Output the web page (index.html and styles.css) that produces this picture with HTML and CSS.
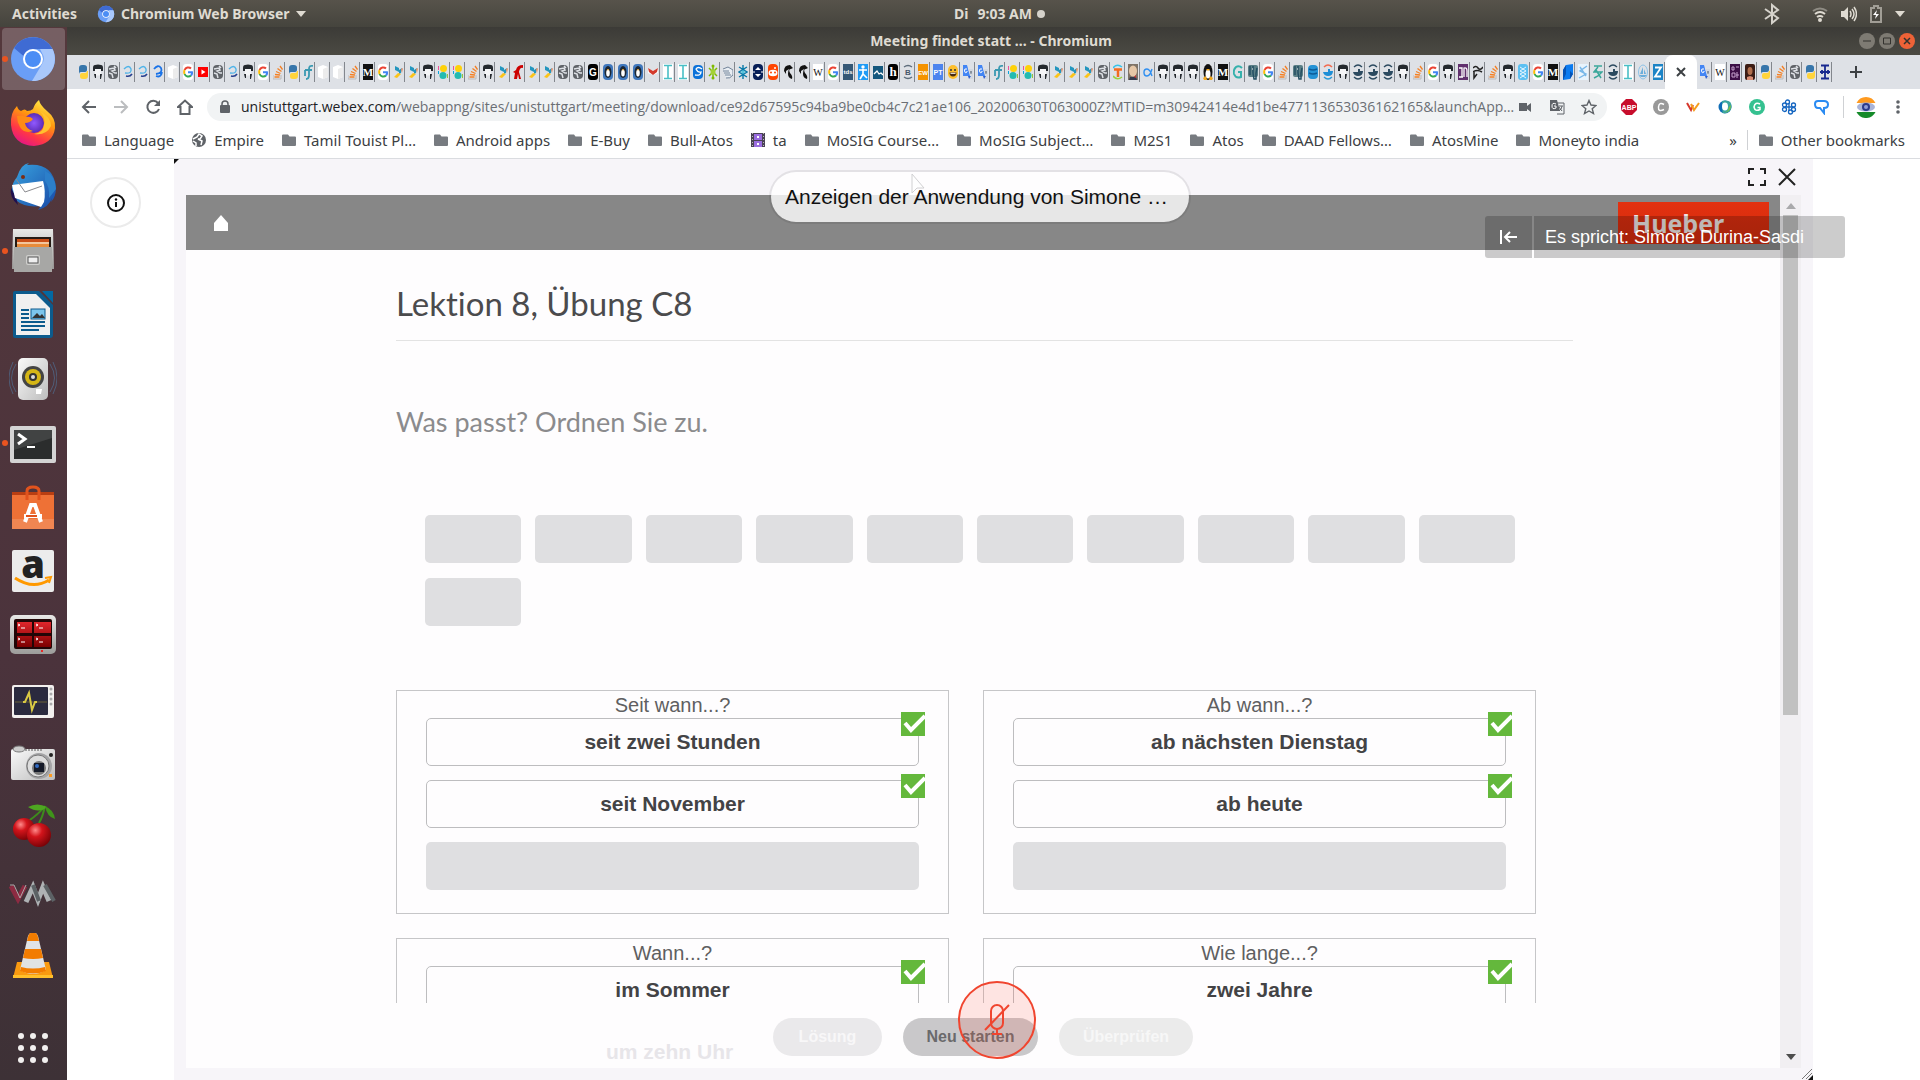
FILE: index.html
```html
<!DOCTYPE html>
<html lang="de">
<head>
<meta charset="utf-8">
<title>Meeting findet statt ... - Chromium</title>
<link rel="stylesheet" href="styles.css">
</head>
<body>
<svg class="sprite" aria-hidden="true">
  <defs>
    <linearGradient id="fox" x1="0.8" y1="0" x2="0.3" y2="1"><stop offset="0" stop-color="#fff44f"/><stop offset=".4" stop-color="#ff980e"/><stop offset=".75" stop-color="#ff3647"/><stop offset="1" stop-color="#e31587"/></linearGradient>
    <linearGradient id="metal" x1="0" y1="0" x2="0" y2="1"><stop offset="0" stop-color="#e8e8e6"/><stop offset="1" stop-color="#9c9c9a"/></linearGradient>
    <linearGradient id="silver" x1="0" y1="0" x2="1" y2="1"><stop offset="0" stop-color="#fafafa"/><stop offset="1" stop-color="#bdbdbd"/></linearGradient>
    <linearGradient id="redscreen" x1="0" y1="0" x2="0" y2="1"><stop offset="0" stop-color="#e0262c"/><stop offset="1" stop-color="#7c0000"/></linearGradient>
    <linearGradient id="bird" x1="0" y1="0" x2="1" y2="1"><stop offset="0" stop-color="#3aa5e0"/><stop offset="1" stop-color="#1747a6"/></linearGradient>
    <radialGradient id="cherry" cx=".35" cy=".3" r=".8"><stop offset="0" stop-color="#ff8a8a"/><stop offset=".35" stop-color="#d3141b"/><stop offset="1" stop-color="#6c0004"/></radialGradient>
    <radialGradient id="globe-core"><stop offset="0" stop-color="#9059ff"/><stop offset="1" stop-color="#5b2bb5"/></radialGradient>
  </defs>
  <symbol id="chromium" viewBox="0 0 48 48">
    <circle cx="24" cy="24" r="22" fill="#6a9ef6"/>
    <path d="M5 13A22 22 0 0 1 43.500 14H24a10 10 0 0 0-9.500 7Z" fill="#3f6bd3"/>
    <path d="M43.500 14A22 22 0 0 1 23 46l9.500-16a10 10 0 0 0 .5-12L31 14Z" fill="#a9c8fb"/>
    <circle cx="24" cy="24" r="10" fill="#fff"/><circle cx="24" cy="24" r="8" fill="#4b8df5"/>
  </symbol>
  <symbol id="folder" viewBox="0 0 14 13"><path d="M1 1h5l1.500 2H13q1 0 1 1v7.500q0 1-1 1H1q-1 0-1-1V2q0-1 1-1Z" fill="#777b80"/></symbol>
  <symbol id="tick" viewBox="0 0 24 24"><path d="M0 0h24v24H0Z" fill="#64b83c"/><path d="M4 11l6 7L24 4" fill="none" stroke="#fff" stroke-width="4"/></symbol>
</svg>
<template id="favicons">
<svg>
  <symbol id="t-py"><path d="M1 8V4q0-3 3-3h2q3 0 3 2.500V6q0 2-2 2H3Q1 8 1 10Z" fill="#3776ab"/><path d="M10 7v5q0 3-3 3H5q-3 0-3-2.500V11q0-2 2-2h3q2 0 2-2Z" fill="#ffd43b"/></symbol>
  <symbol id="t-gh"><path d="M2 5h6v6q-3 1-6 0Z" fill="#f4f5f7"/><path d="M0 4Q0 1 2 1q3-1 6 0 2 0 2 3v3H8V5H2v2H0ZM1 10h2v4H2ZM7 10h2l-1 5H7Z" fill="#24292e"/></symbol>
  <symbol id="t-globe"><rect y="1" width="10" height="14" rx="4" fill="#5f6368"/><path d="M1 5l5-1 1 2-3 1 3 2 2 0M1 9l3 1 1 4M6 2l2 2" stroke="#dee1e6" stroke-width="1.500" fill="none"/></symbol>
  <symbol id="t-swirl"><path d="M1 5q5-5 7 0 1 5-6 4" fill="none" stroke="#4eb3e8" stroke-width="1.400"/><path d="M3 12q4 1 6-2" fill="none" stroke="#28408f" stroke-width="1.600"/></symbol>
  <symbol id="t-swirlb"><path d="M1 5q4-5 7-1 2 5-5 6M3 12q5 2 6-4" fill="none" stroke="#1a73e8" stroke-width="1.800"/></symbol>
  <symbol id="t-cube"><path d="M0 3l5-2 5 2v10l-5 2-5-2Z" fill="#fff"/><path d="M5 5l5-2v10l-5 2Z" fill="#ececec"/></symbol>
  <symbol id="t-g"><rect width="10" height="16" rx="3" fill="#fff"/><g fill="none" stroke-width="2"><path d="M8 4.500A4 4 0 0 0 1.600 6" stroke="#ea4335"/><path d="M1.600 6a5 5 0 0 0 0 4" stroke="#fbbc05"/><path d="M1.600 10A4 4 0 0 0 8 11.500" stroke="#34a853"/><path d="M8 11.500Q9.300 10 9 8.300H5" stroke="#4285f4"/></g></symbol>
  <symbol id="t-yt"><rect y="3" width="10" height="10" fill="#f00"/><path d="M3.500 5.500 7.500 8l-4 2.500Z" fill="#fff"/></symbol>
  <symbol id="t-so"><path d="M1.500 13h5M2 10.500l5 .5M3 7.500l4.500 2M4.500 4.500l4 3M7 2l2.500 3.500" fill="none" stroke="#f48024" stroke-width="1.300"/><path d="M0 11v4h8v-4" fill="none" stroke="#bcbbbb"/></symbol>
  <symbol id="t-f"><path d="M10 2Q6 1 6 5v6q0 4-3 4M2 6h7M2 6v6" fill="none" stroke="#3b9ab2" stroke-width="1.800"/></symbol>
  <symbol id="t-m"><rect width="10" height="16" fill="#111"/><text x="5" y="12" text-anchor="middle" font-family="Liberation Serif,serif" font-weight="700" font-size="11" fill="#fff">M</text></symbol>
  <symbol id="t-bird"><path d="M2 2l4 2v4L2 6ZM6 6l3-2-1 5-2 1Z" fill="#2596be"/><path d="M1 13l4-4 3 1-4 4Z" fill="#fcc419"/><path d="M8 5l2-1-1 5" fill="#f08a5d"/></symbol>
  <symbol id="t-es"><circle cx="5.500" cy="4.500" r="3.500" fill="#fed10a"/><circle cx="5" cy="11.500" r="3.500" fill="#24bbb1"/><path d="M0 2h1v4H0Z" fill="#ef5098"/><path d="M0 7h1v3H0Z" fill="#07a5de"/><path d="M9 10h1v4H9Z" fill="#93c83e"/></symbol>
  <symbol id="t-red"><path d="M10 1Q4 1 3 6l-3 2 2 1-1 6h3l1-5 1 5h2L6 8q1-5 4-4Z" fill="#c00"/></symbol>
  <symbol id="t-gb"><rect width="10" height="16" rx="3" fill="#000"/><text x="5" y="12" text-anchor="middle" font-family="Liberation Sans,sans-serif" font-weight="700" font-size="10" fill="#fff">G</text></symbol>
  <symbol id="t-peng"><rect width="10" height="16" rx="4" fill="#3f77bc"/><ellipse cx="5" cy="8" rx="3.500" ry="6" fill="#1c2733"/><ellipse cx="5" cy="9" rx="1.800" ry="3.500" fill="#fff"/><path d="M4 5h2l-1 2Z" fill="#f5a623"/></symbol>
  <symbol id="t-v"><path d="M0 4l5 3 5-3v5l-5 2-5-2Z" fill="#fff"/><path d="M0 4l5 3 5-3-1 4-4 3-4-3Z" fill="#d33a2c"/></symbol>
  <symbol id="t-i"><rect width="10" height="16" fill="#fff"/><path d="M1 1.500h8M1 14.500h8M5 1v14" stroke="#49bfc6" stroke-width="1.600"/></symbol>
  <symbol id="t-bs"><rect y="1" width="10" height="14" rx="4" fill="#0b72d9"/><path d="M9 5q-4-3-6 0 2 4 5 3 0 4-6 3" fill="none" stroke="#fff" stroke-width="1.300"/></symbol>
  <symbol id="t-hub"><path d="M5 1v14M1 4l8 8M9 4l-8 8" stroke="#7fba00" stroke-width="1.500"/><circle cx="5" cy="8" r="2.500" fill="#a4d233"/><circle cx="5" cy="2" r="1.500" fill="#7fba00"/><circle cx="5" cy="14" r="1.500" fill="#7fba00"/></symbol>
  <symbol id="t-hand"><path d="M0 5l5-2 5 3v5q-3 4-7 3M0 7h6M1 9h6M2 11h6" fill="#e9eef3" stroke="#718298"/></symbol>
  <symbol id="t-hex"><path d="M5 1v14M1 3l8 5-8 5M9 3L1 8l8 5" fill="none" stroke="#0879a8" stroke-width="1.400"/><circle cx="5" cy="8" r="1.800" fill="#57c4dd"/></symbol>
  <symbol id="t-navy"><rect width="10" height="16" rx="4" fill="#071f57"/><path d="M5 3l3 3H2ZM5 13l3-3H2Z" fill="#fff"/><path d="M1 7v2M9 7v2" stroke="#fff"/></symbol>
  <symbol id="t-red2"><rect width="10" height="16" rx="4" fill="#ff4500"/><ellipse cx="5" cy="9" rx="4.500" ry="3.300" fill="#fff"/><circle cx="3" cy="8.500" r="1" fill="#ff4500"/><circle cx="7" cy="8.500" r="1" fill="#ff4500"/><circle cx="7" cy="4" r="1" fill="#fff"/></symbol>
  <symbol id="t-horse"><path d="M1 7q0-6 6-6l3 3-2 1q-3 0-1 4 3 3 2 6-4-1-4-5Q5 7 6 5L3 7v3Z" fill="#111"/></symbol>
  <symbol id="t-w"><rect width="10" height="16" fill="#fff"/><text x="5" y="12" text-anchor="middle" font-family="Liberation Serif,serif" font-size="10" fill="#111">W</text></symbol>
  <symbol id="t-tds"><rect width="10" height="16" fill="#355876"/><text x="5" y="10" text-anchor="middle" font-family="Liberation Sans,sans-serif" font-weight="700" font-size="6" fill="#fff">tds</text></symbol>
  <symbol id="t-walk"><rect width="10" height="16" fill="#1f9bf5"/><circle cx="5" cy="3" r="1.700" fill="#fff"/><path d="M1 6h8M5 5v5l-3 5M5 10l4 4" stroke="#fff" stroke-width="1.700" fill="none"/></symbol>
  <symbol id="t-mount"><rect y="2" width="10" height="13" fill="#14587e"/><path d="M1 10l3-3 2 3 2-1 2 2" stroke="#fff" fill="none" stroke-width="1.300"/></symbol>
  <symbol id="t-h"><rect width="10" height="16" rx="3" fill="#000"/><text x="5" y="12" text-anchor="middle" font-family="Liberation Serif,serif" font-weight="700" font-size="13" fill="#fff">h</text></symbol>
  <symbol id="t-b"><path d="M1 3q4-3 8 0M1 13q4 3 8 0" fill="none" stroke="#5e6d7c" stroke-width="1.300"/><text x="5" y="11" text-anchor="middle" font-family="Liberation Sans,sans-serif" font-weight="700" font-size="8" fill="#46586b">B</text></symbol>
  <symbol id="t-ew"><rect width="10" height="16" fill="#f59300"/><text x="5" y="11" text-anchor="middle" font-family="Liberation Sans,sans-serif" font-weight="700" font-size="6" fill="#fff">EW</text></symbol>
  <symbol id="t-pt"><rect width="10" height="16" fill="#4c84ee"/><text x="5" y="11" text-anchor="middle" font-family="Liberation Sans,sans-serif" font-weight="700" font-size="7" fill="#fff">PT</text></symbol>
  <symbol id="t-emo"><rect y="1" width="10" height="14" rx="5" fill="#fdbf2d"/><path d="M2 6h2M6 6h2" stroke="#333" stroke-width="1.500"/><path d="M1.500 8.500h7q0 4-3.500 4t-3.500-4Z" fill="#4a2c12"/><path d="M2.500 9.300h5" stroke="#fff"/></symbol>
  <symbol id="t-gt"><path d="M0 1h4l3 11H0Z" fill="#4285f4"/><path d="M5 5h5v10H6L8 12Z" fill="#d3d8df"/><path d="M5 12h3l-2 3Z" fill="#2a5ed0"/><path d="M4 5Q1 4 1.500 7T4 8V7" stroke="#fff" fill="none"/><path d="M7 8h2M8 7v3" stroke="#6f7b89"/></symbol>
  <symbol id="t-t"><path d="M0 4q4-5 9-1" stroke="#36c3ea" fill="none" stroke-width="1.500"/><path d="M0 12q4 5 9 1" stroke="#9bd13c" fill="none" stroke-width="1.500"/><path d="M1 5.500h8M5 5v8" stroke="#f26b21" stroke-width="2.500"/></symbol>
  <symbol id="t-face"><rect width="10" height="16" fill="#7f7468"/><ellipse cx="5" cy="7" rx="4" ry="5.500" fill="#e6c7a7"/><path d="M2 13h6l1 3H1Z" fill="#333a4d"/><path d="M6 13l2-2v3Z" fill="#c33"/></symbol>
  <symbol id="t-alpha"><path d="M9 5q-2 7-5 7-3 0-3-3.500T4 5q3 0 5 7" fill="none" stroke="#2f8ff0" stroke-width="1.400"/></symbol>
  <symbol id="t-tux"><ellipse cx="5" cy="8" rx="4.500" ry="8" fill="#111"/><ellipse cx="5" cy="10" rx="2.500" ry="4.500" fill="#fff"/><path d="M3 5h4l-2 2ZM0 14l3-2 1 4H1ZM10 14l-3-2-1 4h3Z" fill="#f2a81d"/></symbol>
  <symbol id="t-gteal"><path d="M9 4Q6 1 3 3 0 6 1 10q2 5 7 3V8H5" fill="none" stroke="#35b1ac" stroke-width="2"/></symbol>
  <symbol id="t-pg"><rect y="1" width="10" height="12" rx="2" fill="#5b7f86"/><path d="M2 2v9M5 2v7l1 6h2V9l1-5" fill="none" stroke="#244f63" stroke-width="1.500"/><path d="M4 5h1" stroke="#fff"/></symbol>
  <symbol id="t-db"><rect y="1" width="10" height="14" rx="4" fill="#2492d5"/><path d="M1 5q4 2 8 0M1 9q4 2 8 0" fill="none" stroke="#0d5c98" stroke-width="1.400"/></symbol>
  <symbol id="t-whale"><path d="M1 3q4-4 8 0M1 13q4 4 8 0" fill="none" stroke="#2b4a60" stroke-width="1.300"/><path d="M0 8h5V5h2v2l3 0q0 5-5 5-4 0-5-4Z" fill="#2b4a60"/></symbol>
  <symbol id="t-whaler"><path d="M1 3q4-4 8 0" fill="none" stroke="#f26b50" stroke-width="1.500"/><path d="M1 13q4 4 8 0" fill="none" stroke="#2b9ad8" stroke-width="1.300"/><path d="M0 8h5V5h2v2l3 0q0 5-5 5-4 0-5-4Z" fill="#1d8ed6"/></symbol>
  <symbol id="t-rr"><rect width="10" height="16" fill="#61306e"/><path d="M1 4h3v9M6 13V4q3-1 3 3v6M1 13h4" fill="none" stroke="#fff" stroke-width="1.300"/></symbol>
  <symbol id="t-scr"><path d="M0 4q3-3 5 0t5-1M0 8q4-3 9 0M1 8v6l3-4" fill="none" stroke="#222" stroke-width="1.500"/></symbol>
  <symbol id="t-dots"><rect width="10" height="16" rx="3" fill="#5cc0f2"/><path d="M2 3l6 4-6 3 6 4M8 3L2 7l6 3-6 4" stroke="#e6f6ff" fill="none"/></symbol>
  <symbol id="t-fold"><path d="M3 1l7-1v10l-3 5-7 1V6Z" fill="#0b7bf0"/><path d="M3 1v9l-3 6V6ZM10 10l-3 5V7Z" fill="#0553b5"/></symbol>
  <symbol id="t-ls"><rect width="10" height="16" fill="#e8f3fc"/><path d="M9 2L2 7l6 3-7 4M2 3l6 9" fill="none" stroke="#79b7e8" stroke-width="1.400"/></symbol>
  <symbol id="t-han"><path d="M1 2h8M5 3L1 8h8L5 12l-4 2M3 6l5 8" fill="none" stroke="#3aa79a" stroke-width="1.500"/></symbol>
  <symbol id="t-boat"><ellipse cx="5" cy="8" rx="4.500" ry="7" fill="none" stroke="#8ec3e6"/><path d="M5 3v7H2ZM6 5l2 5H6ZM1 11h8l-2 2H3Z" fill="#6baedb"/></symbol>
  <symbol id="t-z"><rect width="10" height="16" fill="#1c84c6"/><path d="M2 3.500h6L2 12.500h6" fill="none" stroke="#fff" stroke-width="1.800"/></symbol>
  <symbol id="t-slk"><rect width="10" height="16" fill="#3c0f45"/><path d="M2 3h2v3H2ZM6 3h3M2 9h3v4H2ZM7 8v6M6 11h3" stroke="#c7a4ce" fill="none"/></symbol>
  <symbol id="t-girl"><rect width="10" height="16" rx="2" fill="#3b1c14"/><ellipse cx="5" cy="7" rx="2.500" ry="4" fill="#b06e4c"/><path d="M2 16v-3l3-1 3 1v3Z" fill="#d98d74"/></symbol>
  <symbol id="t-hh"><path d="M1 1.500h8M1 14.500h8M5 1v14M0 8h10M2 6v4M8 6v4" stroke="#17288f" stroke-width="1.800"/></symbol>
</svg>
</template>

<header class="topbar">
  <div class="topbar-left">
    <button class="bare">Activities</button>
    <button class="bare app-menu"><svg width="18" height="18"><use href="#chromium"/></svg>Chromium Web Browser<svg width="10" height="6" viewBox="0 0 10 6"><path d="M0 0h10L5 6Z" fill="currentColor"/></svg></button>
  </div>
  <button class="bare clock"><span>Di</span><span>9:03 AM</span><i class="dot"></i></button>
  <div class="topbar-right">
    <svg class="bt" width="18" height="22" viewBox="0 0 18 22"><path d="M2 6l13 9-6 5V2l6 5-13 9" fill="none" stroke="#d5d2cb" stroke-width="2"/></svg>
    <svg width="16" height="16" viewBox="0 0 16 16" fill="none" stroke="#dfdbd2" stroke-width="2"><path d="M1 5q7-5 14 0" stroke="#8f8c84"/><path d="M3 8q5-4 10 0M5 11q3-2 6 0"/><circle cx="8" cy="14" r="1"/></svg>
    <svg width="16" height="16" viewBox="0 0 16 16"><path d="M0 5h3l4-4v14l-4-4H0Z" fill="#dfdbd2"/><path d="M9 5q2 3 0 6M11 3q4 5 0 10M13 1q5 7 0 14" fill="none" stroke="#dfdbd2" stroke-width="1.500"/></svg>
    <svg width="12" height="18" viewBox="0 0 12 18"><path d="M1 3h3V1h4v2h3v14H1Z" fill="none" stroke="#a19e96" stroke-width="2"/><path d="M7 5l-4 5h3l-1 4 4-5H6Z" fill="#fff"/></svg>
    <svg width="10" height="6" viewBox="0 0 10 6"><path d="M0 0h10L5 6Z" fill="#dfdbd2"/></svg>
  </div>
</header>

<div class="desktop">
<nav class="dock" aria-label="Dock">
  <button class="app active running" aria-label="Chromium"><svg><use href="#chromium"/></svg></button>
  <button class="app" aria-label="Firefox"><svg viewBox="0 0 48 48"><path d="M2 26Q1 14 8 7q1 4 4 5 4-3 6 0 4 0 6-2 2-6 6-9 1 5 8 11 9 7 8 17-2 16-21 18Q4 46 2 26Z" fill="url(#fox)"/><circle cx="25" cy="24" r="10" fill="url(#globe-core)"/><path d="M8 17q6-1 9 1 4-1 7 2-3 4-8 4 1 6 8 8-9 3-13-4-3-5-3-11Z" fill="#ff8b16"/><path d="M31 12q6 7 4 14-1 8-10 9 12 2 17-8Q42 18 31 12Z" fill="#ffc22e"/></svg></button>
  <button class="app" aria-label="Thunderbird"><svg viewBox="0 0 48 48"><path d="M8 14Q12 1 20 0l-2 2Q44-1 47 24q0 10-5 15l1-4q-3 9-14 12l3-4q-16 2-24-5Q-2 26 8 14Z" fill="url(#bird)"/><path d="M2 25q-2 9 7 17l-2-8Z" fill="#20104f"/><path d="M3 22l31-4q3 10 1 21L32 44 6 35Z" fill="#fff"/><path d="M7 16l9 13 17-6" fill="none" stroke="#8b8b8f"/><path d="M36 18q5 6 4 17l7-9Q46 12 36 8Z" fill="#2c7fca"/><circle cx="14" cy="14" r="2" fill="#7b2d12"/></svg></button>
  <button class="app running" aria-label="Dateien"><svg viewBox="0 0 48 48"><path d="M4 2h40l1 40H3Z" fill="url(#metal)"/><path d="M6 10h36v10H6Z" fill="#241a14"/><path d="M8 12h32v4H8Z" fill="#c94d16"/><path d="M8 15h32v6H8Z" fill="#e88b39"/><path d="M8 16h32" stroke="#fff"/><path d="M5 20h38v25H5Z" fill="#a7a7a5"/><rect x="17" y="28" width="14" height="10" rx="2" fill="#cfcfcd"/><rect x="19" y="30" width="10" height="6" fill="#eee" stroke="#555"/></svg></button>
  <button class="app" aria-label="Writer"><svg viewBox="0 0 48 48"><path d="M6 0h24l14 14v30q0 3-3 3H6q-2 0-2-2V2q0-2 2-2Z" fill="#0c5b8d"/><path d="M33 0h11v12Z" fill="#0369a3"/><path d="M7 3h20l14 14v27H7Z" fill="#f0f0f0"/><path d="M12 19h8M12 23h8M12 27h8M12 31h24M12 35h24M12 39h18" stroke="#0c5b8d" stroke-width="2"/><rect x="22" y="18" width="14" height="10" fill="#7cc5ec" stroke="#0c5b8d"/><path d="M23 27l5-5 3 3 2-2 3 4Z" fill="#333"/></svg></button>
  <button class="app" aria-label="Rhythmbox"><svg viewBox="0 0 48 48"><path d="M7 9q-9 14 0 28M41 9q9 14 0 28M4 7q-8 16 0 32M44 7q8 16 0 32" fill="none" stroke="#4f5d78"/><rect x="9" y="3" width="30" height="42" rx="5" fill="url(#silver)"/><circle cx="24" cy="22" r="11" fill="#444"/><circle cx="24" cy="22" r="8" fill="#d5b616"/><circle cx="24" cy="22" r="4" fill="#333"/><circle cx="24" cy="22" r="2" fill="#ddd"/><path d="M27 34h6l-1 5h-5Z" fill="#fff"/></svg></button>
  <button class="app running" aria-label="Terminal"><svg viewBox="0 0 48 48"><rect x="1" y="7" width="46" height="37" rx="2" fill="#d4d4d4"/><rect x="5" y="11" width="38" height="29" fill="#2b2d2d"/><path d="M5 11h38v8L5 31Z" fill="#414343"/><path d="M9 15l7 5-7 5" fill="none" stroke="#fff" stroke-width="3"/><path d="M18 28h8" stroke="#fff" stroke-width="2"/></svg></button>
  <button class="app" aria-label="Software"><svg viewBox="0 0 48 48"><path d="M3 9h42v6H3Z" fill="#b83e12"/><path d="M3 12h42v34H3Z" fill="#ee7136"/><path d="M3 36h42v10H3Z" fill="#f08652"/><path d="M18 17V8q0-4 6-4t6 4v9" fill="none" stroke="#e1531d" stroke-width="3"/><path d="M16 39l6-17h4l6 17" fill="none" stroke="#fff" stroke-width="4"/><path d="M15 33h18" stroke="#fff" stroke-width="4"/><path d="M17 33h11" stroke="#e1531d" stroke-width="2"/></svg></button>
  <button class="app" aria-label="Amazon"><svg viewBox="0 0 48 48"><rect x="3" y="3" width="42" height="42" rx="2" fill="#ececec"/><text x="24" y="31" text-anchor="middle" font-family="Open Sans,sans-serif" font-weight="800" font-size="38" fill="#222">a</text><path d="M6 31q18 12 34 2" fill="none" stroke="#f90" stroke-width="3"/><path d="M36 31l6-1-2 6" fill="none" stroke="#f90" stroke-width="2"/></svg></button>
  <button class="app" aria-label="Terminator"><svg viewBox="0 0 48 48"><rect x="1" y="4" width="46" height="39" rx="5" fill="url(#metal)"/><rect x="5" y="8" width="38" height="30" rx="2" fill="#220607"/><path d="M8 11h15v11H8ZM25 11h17v11H25ZM8 25h15v11H8ZM25 25h17v11H25Z" fill="url(#redscreen)"/><path d="M9 13l2 1-2 1M12 17h4M27 13l2 1-2 1M30 17h4M9 27l2 1-2 1M12 31h4M27 27l2 1-2 1M30 31h4" stroke="#fff" fill="none"/><circle cx="33" cy="40" r="1" fill="red"/></svg></button>
  <button class="app" aria-label="Systemmonitor"><svg viewBox="0 0 48 48"><rect x="3" y="10" width="42" height="33" rx="2" fill="#f3f0ee"/><rect x="5" y="12" width="34" height="28" rx="1" fill="#2b2a3e"/><path d="M6 27h32" stroke="#6b6138"/><path d="M14 27h2l4-9 3 17 3-8h2" fill="none" stroke="#d9c944" stroke-width="2"/><g fill="#aaa"><circle cx="42" cy="14" r="1.500"/><circle cx="42" cy="19" r="1.500"/><circle cx="42" cy="24" r="1.500"/><circle cx="42" cy="29" r="1.500"/></g></svg></button>
  <button class="app" aria-label="Kamera"><svg viewBox="0 0 48 48"><rect x="2" y="10" width="44" height="31" rx="2" fill="url(#silver)"/><ellipse cx="10" cy="10" rx="6" ry="3" fill="#ccc" stroke="#777"/><path d="M16 11h18" stroke="#555" stroke-dasharray="2 1"/><circle cx="30" cy="27" r="13" fill="#a4a4a6"/><circle cx="29" cy="27" r="11" fill="#ddd" stroke="#777"/><circle cx="30" cy="29" r="7" fill="#777"/><path d="M25 24h10v9H25Z" fill="#151a28"/><circle cx="28" cy="27" r="2" fill="#326bc2"/><circle cx="42" cy="16" r="2" fill="#222"/><path d="M40 35h3v3h-3Z" fill="#ff9b21"/></svg></button>
  <button class="app" aria-label="CherryTree"><svg viewBox="0 0 48 48"><path d="M18 19q12-8 18-16-2 10-6 17" fill="none" stroke="#3d8b1c" stroke-width="2"/><path d="M19 4q9-5 19 0-8 7-19 0Z" fill="#4ea721"/><path d="M36 3q9 4 10 13-8-2-10-13Z" fill="#3f941a"/><circle cx="15" cy="26" r="11" fill="url(#cherry)"/><circle cx="30" cy="32" r="12" fill="url(#cherry)"/></svg></button>
  <button class="app" aria-label="Virtual Machine Manager"><svg viewBox="0 0 48 48"><path d="M2 19l7 13 7-13" fill="none" stroke="#8c2b42" stroke-width="5"/><path d="M1 18h4l6 13 6-13" fill="none" stroke="#aaa"/><path d="M17 35l7-15 5 13 5-13 6 14" fill="none" stroke="#aeb2b4" stroke-width="5"/><path d="M24 18l6 16M36 18l9 16" stroke="#5c6265" stroke-width="4"/></svg></button>
  <button class="app" aria-label="VLC"><svg viewBox="0 0 48 48"><path d="M8 31h32l4 16H4Z" fill="#f99a10"/><path d="M4 44h40v3H4Z" fill="#ffbf2a"/><path d="M22 2h4q2 0 3 3l8 34q-13 8-26 0L19 5q1-3 3-3Z" fill="#e0e3e5"/><path d="M22 2h4q2 0 3 4l1 4H18l1-4q1-4 3-4ZM16 18h16l2 9q-10 2-20 0ZM12 36q12 3 24 0l1 4q-13 5-26 0Z" fill="#f27c00"/></svg></button>
  <button class="app grid-app" aria-label="Anwendungen anzeigen"><svg viewBox="0 0 48 48" fill="#f2f0ef"><circle cx="12" cy="12" r="3"/><circle cx="24" cy="12" r="3"/><circle cx="36" cy="12" r="3"/><circle cx="12" cy="24" r="3"/><circle cx="24" cy="24" r="3"/><circle cx="36" cy="24" r="3"/><circle cx="12" cy="36" r="3"/><circle cx="24" cy="36" r="3"/><circle cx="36" cy="36" r="3"/></svg></button>
</nav>

<div class="window">
  <div class="titlebar">
    <span class="window-title">Meeting findet statt ... - Chromium</span>
    <div class="window-buttons">
      <button aria-label="Minimieren"><svg width="10" height="10"><path d="M1 5h8" stroke="#33322e"/></svg></button>
      <button aria-label="Maximieren"><svg width="10" height="10"><path d="M1.500 2h7v6h-7Z" stroke="#33322e" fill="none"/></svg></button>
      <button class="close" aria-label="Schließen"><svg width="10" height="10"><path d="M2 2l6 6M8 2L2 8" stroke="#33322e" stroke-width="1.500"/></svg></button>
    </div>
  </div>
  <div class="tabstrip">
    <div class="tabs" id="tabs-before"></div>
    <button class="tab-active" aria-label="Tab schließen"><svg width="12" height="12"><path d="M2 2l8 8M10 2l-8 8" stroke="#3c4043" stroke-width="2"/></svg></button>
    <div class="tabs" id="tabs-after"></div>
    <button class="new-tab" aria-label="Neuer Tab"><svg width="14" height="14"><path d="M7 1v12M1 7h12" stroke="#3c4043" stroke-width="2"/></svg></button>
  </div>
  <div class="toolbar">
    <div class="nav-buttons">
      <button aria-label="Zurück"><svg viewBox="0 0 16 16"><path d="M15 8H2M8 2L2 8l6 6" fill="none" stroke="#5f6368" stroke-width="2"/></svg></button>
      <button aria-label="Vor"><svg viewBox="0 0 16 16"><path d="M1 8h13M8 2l6 6-6 6" fill="none" stroke="#bbbdbf" stroke-width="2"/></svg></button>
      <button aria-label="Neu laden"><svg viewBox="0 0 16 16"><path d="M13 4a6 6 0 1 0 1 6" fill="none" stroke="#5f6368" stroke-width="2"/><path d="M15 1v6H9Z" fill="#5f6368"/></svg></button>
      <button aria-label="Startseite"><svg viewBox="0 0 16 16"><path d="M1 8l7-6.500L15 8h-2.500v7h-9V8Z" fill="none" stroke="#5f6368" stroke-width="2"/></svg></button>
    </div>
    <div class="omnibox">
      <svg class="lock" width="10" height="14" viewBox="0 0 10 14"><path d="M2 6V4q0-3 3-3t3 3v2" fill="none" stroke="#5f6368" stroke-width="1.500"/><rect y="5" width="10" height="8" rx="1" fill="#5f6368"/></svg>
      <p class="url"><b>unistuttgart.webex.com</b>/webappng/sites/unistuttgart/meeting/download/ce92d67595c94ba9be0cb4c7c21ae106_20200630T063000Z?MTID=m30942414e4d1be477113653036162165&amp;launchApp…</p>
      <div class="icon-row">
        <button aria-label="Kamera"><svg viewBox="0 0 16 16"><path d="M2 4h8v3l4-3v9l-4-3v2H2Z" fill="#5f6368"/></svg></button>
        <button aria-label="Übersetzen"><svg viewBox="0 0 16 16"><path d="M1 1h7l3 11H1Z" fill="#5f6368"/><path d="M8 4h7v11H8" fill="none" stroke="#5f6368"/><path d="M7 5Q3 3 3 7t4 2V7H5" fill="none" stroke="#fff"/><path d="M10 7h4M13 7q0 3-3 5M10 8l3 4" stroke="#5f6368" fill="none"/></svg></button>
        <button aria-label="Lesezeichen"><svg viewBox="0 0 16 16"><path d="M8 1.500l2 4.500 5 .5-3.800 3.200 1.300 4.800L8 12l-4.500 2.500 1.300-4.800L1 6.500 6 6Z" fill="none" stroke="#5f6368" stroke-width="1.400"/></svg></button>
      </div>
    </div>
    <div class="icon-row extensions">
      <button aria-label="Adblock Plus"><svg viewBox="0 0 16 16"><path d="M5 0h6l5 5v6l-5 5H5l-5-5V5Z" fill="#c70d2c"/><text x="8" y="11" text-anchor="middle" font-family="Liberation Sans,sans-serif" font-weight="700" font-size="7" fill="#fff">ABP</text></svg></button>
      <button aria-label="Erweiterung C"><svg viewBox="0 0 16 16"><circle cx="8" cy="8" r="8" fill="#999"/><path d="M11 5.500Q6 2.500 5.500 8t5.500 2.500" fill="none" stroke="#fff" stroke-width="1.500"/></svg></button>
      <button aria-label="Erweiterung V"><svg viewBox="0 0 16 16"><path d="M2 4l4 7 2-5" fill="none" stroke="#d6372c" stroke-width="2"/><path d="M6 5l3 6 5-7" fill="none" stroke="#f59d1e" stroke-width="2"/></svg></button>
      <button aria-label="Webex"><svg viewBox="0 0 16 16"><circle cx="8" cy="8" r="6.500" fill="#0f6cb6"/><path d="M5 2Q15 0 14.500 8q-1 7-9 6Z" fill="#3aa5a0"/><path d="M14 6q0 8-9 8 6 0 7-6Z" fill="#7ac142"/><ellipse cx="8" cy="7.500" rx="3" ry="4" fill="#fff"/></svg></button>
      <button aria-label="Grammarly"><svg viewBox="0 0 16 16"><circle cx="8" cy="8" r="8" fill="#35c190"/><path d="M11 5Q6 2.500 5 8q1 5 6 2.500V8.500H8.500" fill="none" stroke="#fff" stroke-width="1.500"/></svg></button>
      <button aria-label="Kleeblatt"><svg viewBox="0 0 16 16" fill="none" stroke="#1465c0" stroke-width="1.300"><circle cx="3.500" cy="6" r="2"/><circle cx="12.500" cy="6" r="2"/><circle cx="3.500" cy="10.500" r="2"/><circle cx="12.500" cy="10.500" r="2"/><circle cx="6.500" cy="3" r="2"/><circle cx="9.500" cy="13" r="2"/><path d="M8 4v8M5 8h6"/></svg></button>
      <button aria-label="Sprechblase"><svg viewBox="0 0 16 16"><path d="M2 5q0-3 3-3h6q4 0 4 3.500T11 9v5L7 9H5Q2 9 2 5Z" fill="none" stroke="#2a8bf2" stroke-width="2"/></svg></button>
    </div>
    <div class="profile">
      <button class="avatar" aria-label="Profil"><svg width="22" height="22" viewBox="0 0 22 22"><circle cx="11" cy="11" r="10.500" fill="#fff"/><path d="M1.500 7a10.500 10.500 0 0 1 19 0Z" fill="#ff9a1f"/><path d="M1.500 16a10.500 10.500 0 0 0 19 0Z" fill="#158a2a"/><ellipse cx="11" cy="11" rx="9" ry="4.500" fill="#a9b4d8"/><circle cx="11" cy="11" r="4" fill="#2b3a8c"/><circle cx="11" cy="11" r="2" fill="#8e9cd8"/></svg></button>
      <button aria-label="Menü"><svg width="4" height="16" fill="#5f6368"><circle cx="2" cy="3" r="1.800"/><circle cx="2" cy="8" r="1.800"/><circle cx="2" cy="13" r="1.800"/></svg></button>
    </div>
  </div>
  <nav class="bookmarks" aria-label="Lesezeichen">
    <a href="#"><svg><use href="#folder"/></svg>Language</a>
    <a href="#"><svg viewBox="0 0 14 14"><circle cx="7" cy="7" r="7" fill="#5f6368"/><path d="M1 6l4-2 2-3 3 2-2 3H6l4 2-1 4M1 8l3 2v3" fill="none" stroke="#fff" stroke-width="1.500"/></svg>Empire</a>
    <a href="#"><svg><use href="#folder"/></svg>Tamil Touist Pl…</a>
    <a href="#"><svg><use href="#folder"/></svg>Android apps</a>
    <a href="#"><svg><use href="#folder"/></svg>E-Buy</a>
    <a href="#"><svg><use href="#folder"/></svg>Bull-Atos</a>
    <a href="#"><svg viewBox="0 0 14 14"><path d="M0 0h14v14H0Z" fill="#4a4355"/><path d="M3 1h8v6H3ZM3 8h8v6H3Z" fill="#9a6de0"/><path d="M1.500 0v14M12.500 0v14" stroke="#bbb" stroke-dasharray="1 2"/><path d="M7 3v2M7 10v2" stroke="#fff" stroke-width="2"/></svg>ta</a>
    <a href="#"><svg><use href="#folder"/></svg>MoSIG Course…</a>
    <a href="#"><svg><use href="#folder"/></svg>MoSIG Subject…</a>
    <a href="#"><svg><use href="#folder"/></svg>M2S1</a>
    <a href="#"><svg><use href="#folder"/></svg>Atos</a>
    <a href="#"><svg><use href="#folder"/></svg>DAAD Fellows…</a>
    <a href="#"><svg><use href="#folder"/></svg>AtosMine</a>
    <a href="#"><svg><use href="#folder"/></svg>Moneyto india</a>
    <button class="more" aria-label="Weitere Lesezeichen">»</button>
    <a href="#" class="other"><svg><use href="#folder"/></svg>Other bookmarks</a>
  </nav>

  <main class="meeting">
    <aside class="info-rail"><button class="info" aria-label="Informationen"><svg width="20" height="20"><circle cx="10" cy="10" r="8" fill="none" stroke="#111" stroke-width="2"/><path d="M10 9v5" stroke="#111" stroke-width="2"/><circle cx="10" cy="6.500" r="1.200" fill="#111"/></svg></button></aside>
    <section class="share">
      <div class="share-top">
        <button aria-label="Vollbild"><svg width="18" height="18"><path d="M1 6V1h5M12 1h5v5M17 12v5h-5M6 17H1v-5" fill="none" stroke="#222" stroke-width="2"/></svg></button>
        <button aria-label="Schließen"><svg width="18" height="18"><path d="M1 1l16 16M17 1L1 17" stroke="#222" stroke-width="2"/></svg></button>
      </div>
      <div class="share-body">
        <div class="page">
          <div class="page-header">
            <a href="#" aria-label="Start"><svg width="16" height="18" viewBox="0 0 16 18"><path d="M8 1l7 8v8H1V9Z" fill="#fff"/></svg></a>
            <span class="brand">Hueber</span>
          </div>
          <div class="exercise">
            <h1>Lektion 8, Übung C8</h1>
            <p class="task">Was passt? Ordnen Sie zu.</p>
            <div class="slots"><i></i><i></i><i></i><i></i><i></i><i></i><i></i><i></i><i></i><i></i><i></i></div>
            <div class="groups">
              <section class="group"><h2>Seit wann...?</h2>
                <div class="answer">seit zwei Stunden<svg class="check"><use href="#tick"/></svg></div>
                <div class="answer">seit November<svg class="check"><use href="#tick"/></svg></div>
                <div class="answer empty"></div></section>
              <section class="group"><h2>Ab wann...?</h2>
                <div class="answer">ab nächsten Dienstag<svg class="check"><use href="#tick"/></svg></div>
                <div class="answer">ab heute<svg class="check"><use href="#tick"/></svg></div>
                <div class="answer empty"></div></section>
              <section class="group"><h2>Wann...?</h2>
                <div class="answer">im Sommer<svg class="check"><use href="#tick"/></svg></div></section>
              <section class="group"><h2>Wie lange...?</h2>
                <div class="answer">zwei Jahre<svg class="check"><use href="#tick"/></svg></div></section>
            </div>
          </div>
          <div class="page-footer">
            <span class="ghost">um zehn Uhr</span>
            <button class="pill solve">Lösung</button>
            <button class="pill restart">Neu starten</button>
            <button class="pill verify">Überprüfen</button>
          </div>
        </div>
        <div class="scrollbar">
          <svg width="10" height="6"><path d="M0 6h10L5 0Z" fill="#a9a9ab"/></svg>
          <div class="track"><div class="thumb"></div></div>
          <svg width="10" height="6"><path d="M0 0h10L5 6Z" fill="#4d4d4d"/></svg>
        </div>
      </div>
      <div class="share-bottom"><svg width="12" height="12"><path d="M1 11L11 1M5 11l6-6" stroke="#777"/><path d="M12 7v5H7Z" fill="#111"/></svg></div>
      <div class="notice">Anzeigen der Anwendung von Simone …</div>
      <svg class="pointer" width="16" height="24" viewBox="0 0 16 24"><path d="M1 2v19l5-5h7Z" fill="#fff" stroke="#c6c6c8"/></svg>
      <button class="mic" aria-label="Stummschaltung aufheben"><svg width="28" height="32" viewBox="0 0 28 32" fill="none" stroke="#f0452f" stroke-width="2"><rect x="8" y="1" width="12" height="24" rx="6"/><path d="M14 25v5M9 30h10M26 1L2 26"/></svg></button>
    </section>
    <div class="speaker">
      <button aria-label="Einklappen"><svg width="18" height="14"><path d="M1 0v14M17 7H5M10 2L5 7l5 5" fill="none" stroke="#fff" stroke-width="2"/></svg></button>
      <p>Es spricht: Simone Durina-Sasdi</p>
    </div>
  </main>
</div>
</div>
<script src="tabs.js"></script>
</body>
</html>
```
FILE: tabs.js
```js
// Open tabs, one favicon name per tab, in strip order.
const before = `py gh globe swirl swirl swirlb cube g yt globe swirl gh g so py f cube cube so m g bird bird gh es es so gh bird red bird bird globe globe
gb peng peng peng v i i bs hub hand hex navy red2 horse horse w g tds walk mount h b ew pt emo gt gt f es es gh bird bird bird globe
t face alpha gh gh gh tux m gteal pg g so pg db whaler gh whale whale whale gh so g gh rr scr so gh dots g m fold ls han whale i boat z`;
const after = `gt w slk girl py so globe py hh`;

const icons = document.getElementById("favicons").content;

function fill(id, names) {
  document.getElementById(id).innerHTML = names.trim().split(/\s+/)
    .map(n => `<button class="tab" aria-label="Tab"><svg viewBox="0 0 10 16">${icons.getElementById("t-" + n).innerHTML}</svg></button>`)
    .join("");
}
fill("tabs-before", before);
fill("tabs-after", after);
```
FILE: styles.css
```css
* { box-sizing: border-box; }
body {
  margin: 0;
  height: 100vh;
  display: flex;
  flex-direction: column;
  overflow: hidden;
  font: 15px/20px "Noto Sans", "Open Sans", sans-serif;
  color: #3c4043;
  background: #fff;
}
button { margin: 0; padding: 0; border: 0; background: none; font: inherit; color: inherit; display: flex; align-items: center; justify-content: center; flex: none; }
svg { display: block; flex: none; }
p, h1, h2 { margin: 0; }
.sprite { position: absolute; width: 0; height: 0; }

.topbar {
  flex: none;
  height: 27px;
  display: grid;
  grid-template-columns: 1fr auto 1fr;
  align-items: center;
  padding: 0 15px 0 12px;
  background: linear-gradient(#57534b, #45443d);
  color: #dfdbd2;
  font-size: 14px;
  font-weight: 700;
}
.topbar-left, .topbar-right { display: flex; align-items: center; }
.topbar-left { gap: 20px; }
.app-menu { gap: 6px; }
.topbar-right { justify-content: flex-end; gap: 13px; }
.bt { margin-right: 18px; }
.clock { gap: 9px; padding-left: 82px; }
.dot { width: 8px; height: 8px; border-radius: 50%; background: #d5d2cb; margin-left: -4px; }

.desktop { flex: 1; display: flex; min-height: 0; }
.dock {
  flex: none;
  width: 67px;
  display: flex;
  flex-direction: column;
  background: linear-gradient(#54383c, #4b333c 60%, #3d3136);
}
.app { position: relative; height: 64px; flex: 0 1 64px; padding-right: 2px; }
.app svg { width: 48px; height: 48px; }
.active::before { content: ""; position: absolute; inset: 1px 2px; border-radius: 4px; background: rgba(255, 255, 255, .2); }
.active svg { position: relative; }
.running::after { content: ""; position: absolute; left: 2px; top: 29px; width: 6px; height: 6px; border-radius: 50%; background: #e95420; }
.grid-app { margin-top: auto; }

.window { flex: 1; min-width: 0; display: flex; flex-direction: column; }
.titlebar {
  flex: none;
  height: 28px;
  display: grid;
  grid-template-columns: 1fr auto 1fr;
  align-items: center;
  padding-right: 5px;
  background: linear-gradient(#3c3b37, #4b4a43);
  color: #dfdbd2;
  font-size: 14px;
  font-weight: 700;
}
.window-title { grid-column: 2; }
.window-buttons { display: flex; gap: 4px; justify-content: flex-end; }
.window-buttons button { width: 16px; height: 16px; border-radius: 50%; background: #7e7b73; }
.window-buttons .close { background: #ee6237; }

.tabstrip { flex: none; height: 34px; display: flex; align-items: center; padding-left: 8px; background: #dee1e6; }
.tabs { display: flex; }
.tab { width: 15px; height: 20px; border-right: 1px solid #83878d; padding-left: 1px; }
.tab svg { width: 10px; height: 16px; }
.tab-active { width: 32px; align-self: stretch; background: #fff; border-radius: 8px 8px 0 0; }
.new-tab { margin-left: 17px; }

.toolbar { flex: none; height: 36px; display: flex; align-items: center; gap: 14px; padding: 0 20px 0 14px; }
.toolbar .icon-row svg, .nav-buttons svg { width: 16px; height: 16px; }
.nav-buttons, .icon-row { display: flex; gap: 16px; }
.omnibox { flex: 1; min-width: 0; height: 28px; display: flex; align-items: center; padding: 0 10px 0 13px; border-radius: 14px; background: #f1f3f4; }
.lock { margin-right: 11px; }
.url { flex: 1; min-width: 0; white-space: nowrap; color: #6b6f74; font: 14px/20px "Open Sans", sans-serif; }
.url b { font-weight: 400; color: #202124; }
.profile { display: flex; align-items: center; gap: 19px; padding-left: 11px; border-left: 1px solid #cfd1d4; }

.bookmarks { flex: none; height: 34px; display: flex; align-items: center; gap: 18px; padding: 0 15px 4px; border-bottom: 1px solid #dadce0; white-space: nowrap; }
.bookmarks a { display: flex; align-items: center; gap: 8px; color: inherit; text-decoration: none; }
.bookmarks svg { width: 14px; height: 14px; }
.more { margin-left: auto; margin-right: -8px; }
.bookmarks .other { border-left: 1px solid #cfd1d4; padding-left: 11px; }

.meeting { position: relative; flex: 1; min-height: 0; display: flex; padding-right: 107px; background: #fff; }
.info-rail { flex: none; width: 107px; padding: 18px 0 0 23px; }
.info { width: 51px; height: 51px; border: 2px solid #ebebeb; border-radius: 50%; }
.share { position: relative; flex: 1; min-width: 0; display: flex; flex-direction: column; background: linear-gradient(135deg, #111 3px, #f7f5f9 4px); }
.share-top { flex: none; height: 36px; display: flex; justify-content: flex-end; align-items: center; gap: 12px; padding-right: 17px; }
.share-body { flex: 1; min-height: 0; display: flex; padding-left: 12px; }
.share-bottom { flex: none; height: 12px; display: flex; justify-content: flex-end; }
.page { flex: 1; min-width: 0; display: flex; flex-direction: column; background: #fefdfe; }
.page-header { flex: none; height: 55px; display: flex; align-items: center; justify-content: space-between; padding: 0 11px 0 27px; background: #878787; }
.brand { width: 151px; height: 42px; padding-left: 14px; background: linear-gradient(#e33110, #d22b0d); color: #eee6e4; font: 700 25px/42px "Open Sans", sans-serif; }

.exercise { flex: 1; min-height: 0; overflow: hidden; padding: 34px 207px 0 210px; }
.exercise h1 { padding-bottom: 18px; border-bottom: 1px solid #e3e3e3; color: #4b4b4d; font: 400 33px/38px Lato, sans-serif; font-variant-ligatures: none; }
.task { margin-top: 65px; color: #8b8b8d; font: 400 27px/32px Lato, sans-serif; }
.slots { display: grid; grid-template-columns: repeat(10, 1fr); gap: 15px 14px; margin: 77px 58px 64px 29px; }
.slots i { height: 48px; border-radius: 5px; background: #dfdfe1; }
.groups { display: grid; grid-template-columns: 1fr 1fr; gap: 24px 34px; margin-right: 37px; }
.group { display: flex; flex-direction: column; gap: 14px; padding: 0 29px 23px; border: 1px solid #c6c6c8; }
.group h2 { margin-bottom: -14px; padding-top: 2px; text-align: center; color: #5f5f61; font: 400 20px/25px "Liberation Sans", sans-serif; }
.answer { position: relative; height: 48px; border: 1px solid #bdbdbf; border-radius: 5px; text-align: center; color: #434345; font: 700 21px/46px "Liberation Sans", sans-serif; }
.empty { border: 0; background: #dfdfe1; }
.check { position: absolute; top: -7px; right: -7px; width: 24px; height: 24px; }

.page-footer { position: relative; flex: none; height: 65px; display: flex; justify-content: center; gap: 21px; padding: 15px 0 0; }
.pill { height: 38px; border-radius: 19px; font: 700 16px/38px "Liberation Sans", sans-serif; }
.solve { width: 109px; background: #eae9eb; color: #f8f7f8; }
.restart { width: 135px; background: #c9c8ca; color: #6a6a6c; }
.verify { width: 134px; background: #ebebeb; color: #f7f7f7; }
.ghost { position: absolute; left: 420px; bottom: 3px; color: #e7e5e9; font: 700 21px/26px "Liberation Sans", sans-serif; }

.scrollbar { flex: none; width: 21px; margin-right: 12px; display: flex; flex-direction: column; align-items: center; gap: 6px; padding: 8px 0; background: #f1eff2; }
.track { flex: 1; width: 15px; }
.thumb { height: 60%; background: #c1c1c1; }

.notice { position: absolute; left: 595px; top: 11px; width: 422px; height: 54px; padding-left: 14px; border: 2px solid rgba(0, 0, 0, .08); border-radius: 27px; background: rgba(255, 255, 255, .8); background-clip: padding-box; color: #111; font: 400 21px/50px "Liberation Sans", sans-serif; white-space: nowrap; }
.pointer { position: absolute; left: 737px; top: 13px; opacity: .8; }
.mic { position: absolute; left: 784px; bottom: 21px; width: 78px; height: 78px; border: 2px solid #f0452f; border-radius: 50%; background: rgba(255, 80, 60, .14); }
.speaker { position: absolute; right: 75px; top: 57px; display: flex; gap: 2px; color: #fff; font: 400 18px/42px "Liberation Sans", sans-serif; }
.speaker button { width: 47px; height: 42px; border-radius: 3px 0 0 3px; background: rgba(0, 0, 0, .2); }
.speaker p { width: 311px; height: 42px; padding-left: 11px; border-radius: 0 3px 3px 0; background: rgba(0, 0, 0, .2); }
```
